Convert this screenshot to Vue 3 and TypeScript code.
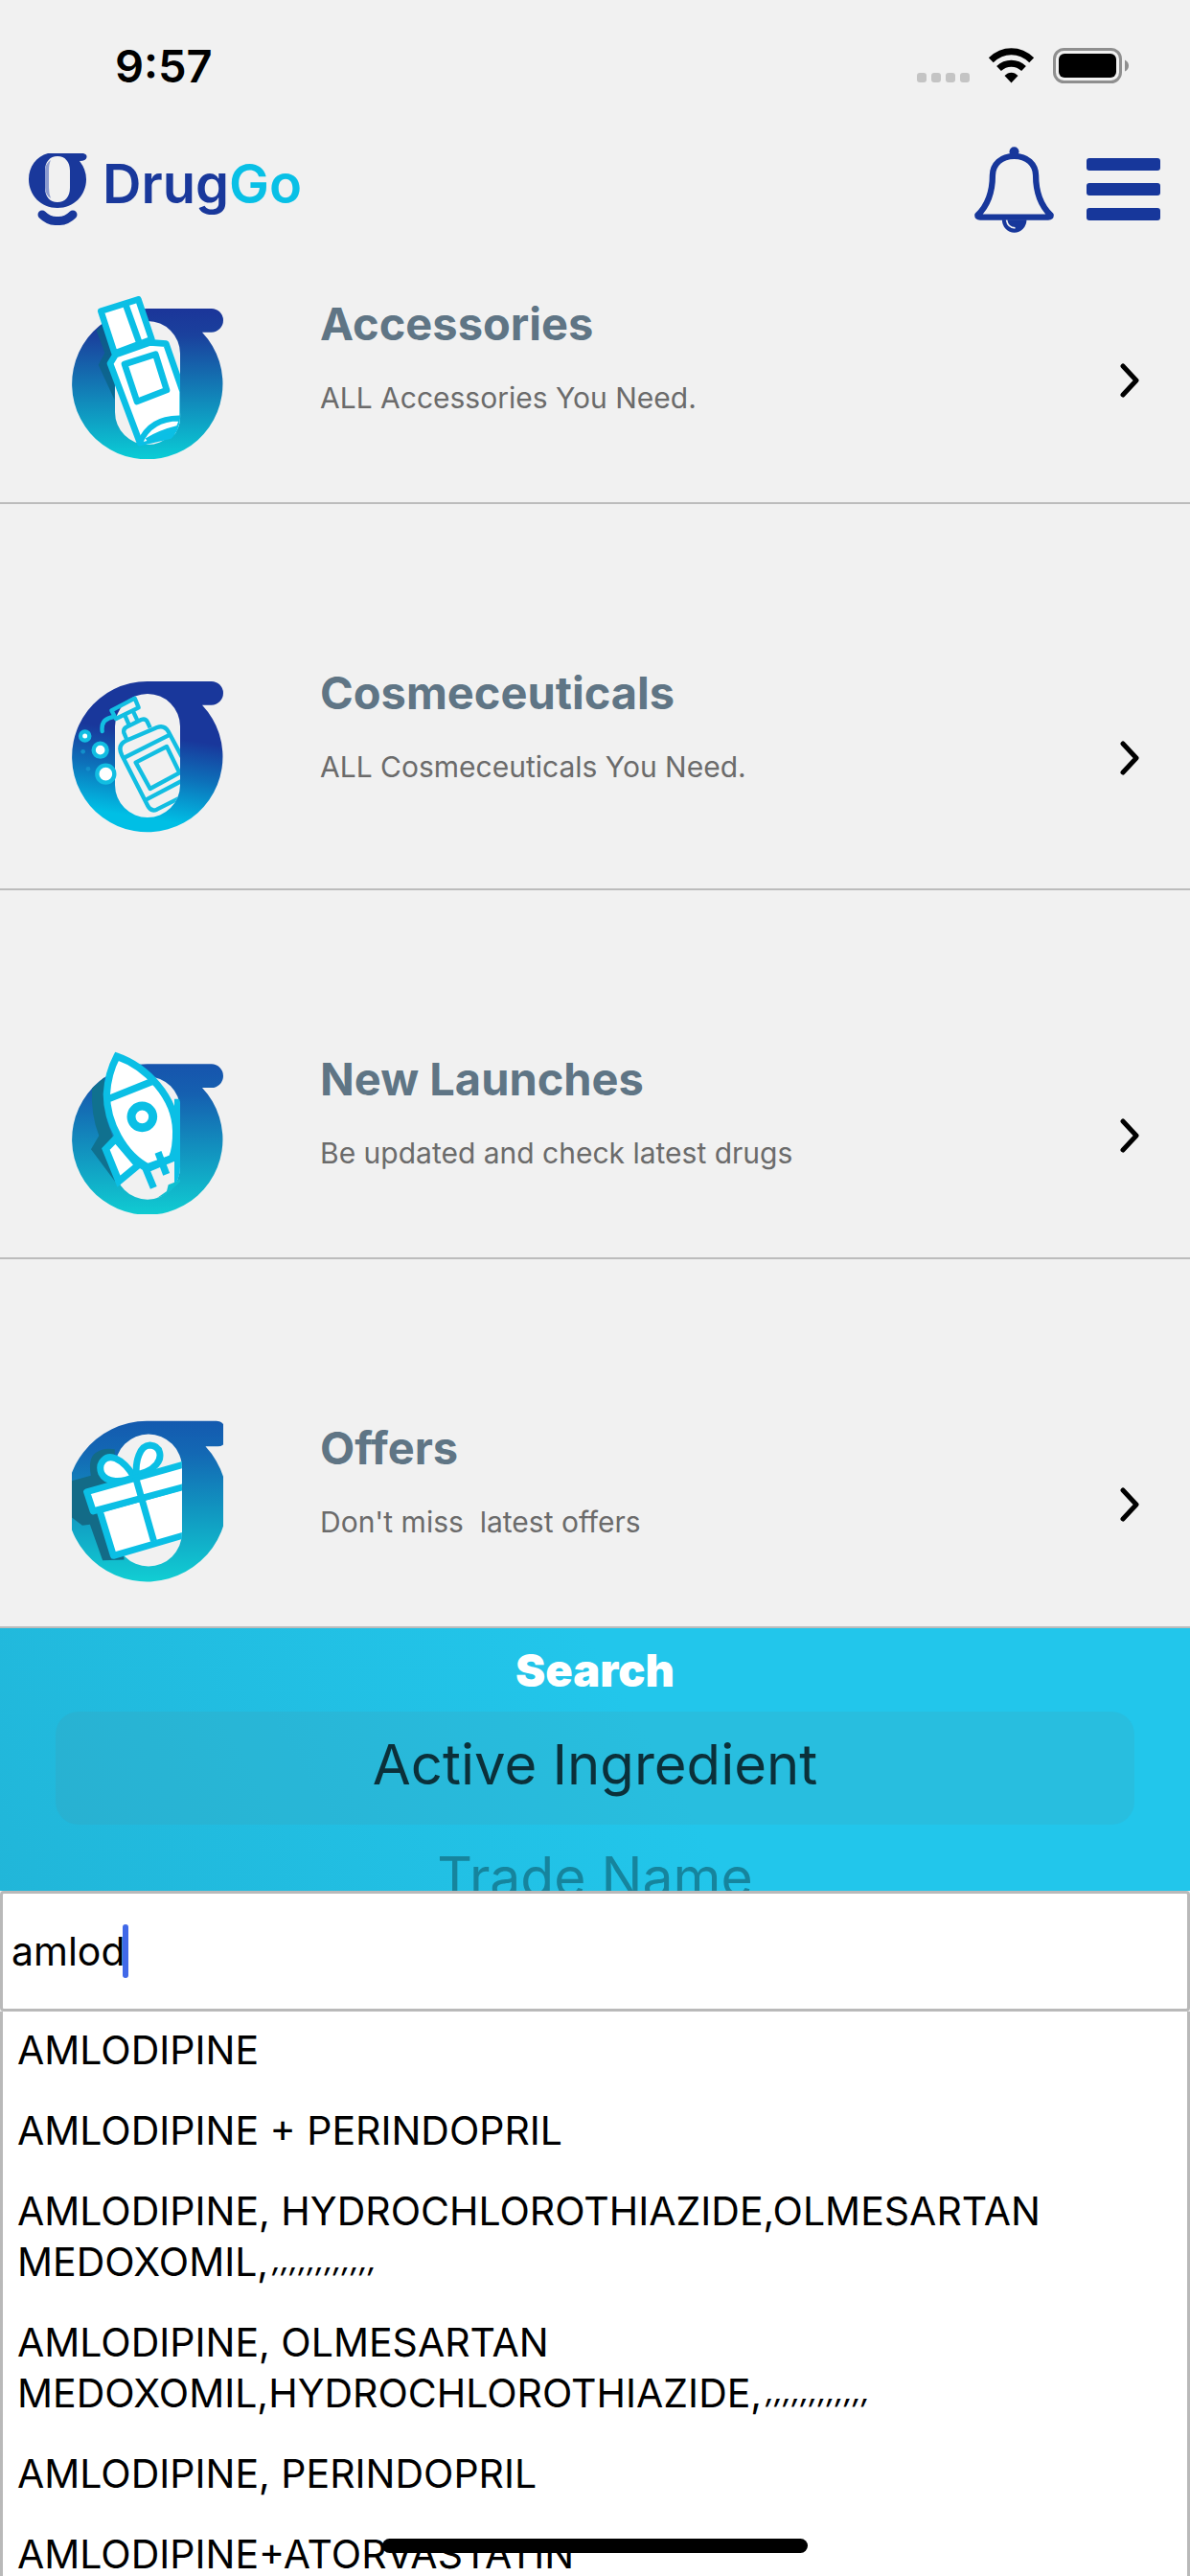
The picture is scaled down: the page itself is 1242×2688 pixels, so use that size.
<script setup lang="ts">
import { ref } from 'vue'

interface Category {
  id: 'accessories' | 'cosmeceuticals' | 'launches' | 'offers'
  title: string
  text: string
  viewBox: string
}

interface Suggestion {
  name: string
  tail?: string
}

const categories: Category[] = [
  { id: 'accessories', title: 'Accessories', text: 'ALL Accessories You Need.', viewBox: '105 87 474 510' },
  { id: 'cosmeceuticals', title: 'Cosmeceuticals', text: 'ALL Cosmeceuticals You Need.', viewBox: '105 45 474 564' },
  { id: 'launches', title: 'New Launches', text: 'Be updated and check latest drugs', viewBox: '105 81 474 510' },
  { id: 'offers', title: 'Offers', text: "Don't miss\u00a0 latest offers", viewBox: '105 68 477 508' },
]

const modes: string[] = ['Active Ingredient', 'Trade Name']
const mode = ref<string>(modes[0])
const query = ref<string>('amlod')

const suggestions: Suggestion[] = [
  { name: 'AMLODIPINE' },
  { name: 'AMLODIPINE + PERINDOPRIL' },
  { name: 'AMLODIPINE, HYDROCHLOROTHIAZIDE,OLMESARTAN MEDOXOMIL,', tail: ',,,,,,,,,,,,' },
  { name: 'AMLODIPINE, OLMESARTAN MEDOXOMIL,HYDROCHLOROTHIAZIDE,', tail: ',,,,,,,,,,,,' },
  { name: 'AMLODIPINE, PERINDOPRIL' },
  { name: 'AMLODIPINE+ATORVASTATIN' },
]
</script>

<template>
  <div class="app">
    <div class="status">
      <span class="time">9:57</span>
      <svg class="status-icons" viewBox="957 47 222 40" width="222" height="40" aria-hidden="true">
        <g fill="#c4c4c4">
          <rect x="957" y="75" width="10" height="10" rx="3" />
          <rect x="972" y="75" width="10" height="10" rx="3" />
          <rect x="987" y="75" width="10" height="10" rx="3" />
          <rect x="1002" y="75" width="10" height="10" rx="3" />
        </g>
        <path d="M1055.500 85.500l-7-7.500c4-4.500 10-4.500 14 0z" />
        <g fill="none" stroke="#000" stroke-width="7">
          <path d="M1042.500 70.500c7.500-7 18.500-7 26 0" />
          <path d="M1034.300 61.700c12.500-12 30-12 42.400 0" />
        </g>
        <rect x="1100.500" y="50.500" width="69" height="34" rx="10" fill="none" stroke="#8f8f8f" stroke-width="3" />
        <rect x="1105" y="55" width="60" height="25" rx="6" />
        <path d="M1174 61.500q4 2 4 6t-4 6z" fill="#8f8f8f" />
      </svg>
    </div>

    <header class="header">
      <a class="brand" href="#" aria-label="DrugGo">
        <svg viewBox="30 160 61 75" width="61" height="75" aria-hidden="true">
          <path fill="#19389b" fill-rule="evenodd" d="M50 160H87Q91 161 90.500 164Q90 168 83 168Q90 177 90 187C90 204 77 217 60 217S30 204 30 187C30 174 38 163 50 160ZM60 163C52 163 47 169 47 178V196C47 205 52 211 60 211S73 205 73 196V178C73 169 68 163 60 163Z" />
          <path fill="#8b9bd0" d="M53 167Q47 171 47 178V196Q47 203 53 207Q51 202 51 196V178Q51 171 53 167Z" />
          <path fill="none" stroke="#19389b" stroke-width="9" stroke-linecap="round" d="M44 224Q51 231 60 230.500Q69 231 76 224" />
        </svg>
        <span class="brand-name">Drug<span class="brand-go">Go</span></span>
      </a>
      <div class="actions">
        <button type="button" class="icon-button" aria-label="Notifications">
          <svg viewBox="352 459 250 270" width="83" height="90" aria-hidden="true">
            <circle cx="477" cy="474" r="15" fill="#17379b" />
            <path fill="none" stroke="#17379b" stroke-width="19" stroke-linejoin="round" d="M477 488C436 488 410 514 409 548C409 606 393 644 362 674Q362 680 370 680H584Q592 680 592 674C561 644 545 606 545 548C544 514 518 488 477 488Z" />
            <path fill="#17379b" d="M439 688H516A38 40 0 0 1 439 688Z" />
            <path fill="none" stroke="#f1f1f1" stroke-width="5" d="M453 689Q457 713 480 714" />
          </svg>
        </button>
        <button type="button" class="icon-button" aria-label="Menu">
          <svg viewBox="0 0 77 66" width="77" height="66" fill="#17379b" aria-hidden="true">
            <rect width="77" height="13" rx="3" />
            <rect y="26" width="77" height="13" rx="3" />
            <rect y="52" width="77" height="13" rx="3" />
          </svg>
        </button>
      </div>
    </header>

    <main class="categories">
      <a v-for="c in categories" :key="c.id" class="row" href="#">
        <svg :class="['picture', c.id]" :viewBox="c.viewBox" aria-hidden="true">
          <template v-if="c.id === 'accessories'">
            <defs>
              <linearGradient id="ga" x1="0" y1="0" x2="0" y2="1">
                <stop offset="0" stop-color="#1b3599" />
                <stop offset=".18" stop-color="#1a419d" />
                <stop offset=".5" stop-color="#1376b3" />
                <stop offset="1" stop-color="#0acdd6" />
              </linearGradient>
              <clipPath id="ca"><path d="M105 80H400L444 240V450A102 102 0 0 1 300 555L105 400Z" /></clipPath>
            </defs>
            <path fill="url(#ga)" fill-rule="evenodd" d="M341 126H542a37 37 0 0 1 0 74H513A236 236 0 1 1 341 126ZM240 267V450a102 102 0 0 0 204 0V267a102 102 0 0 0-204 0Z" />
            <path fill="#0b6384" opacity=".75" d="M200 178L182 195 208 265 188 302 238 410 240 330 225 290 235 262Z" />
            <g clip-path="url(#ca)" fill="#fff" stroke="#0bbfe5" stroke-width="20" stroke-linejoin="round">
              <path d="M196 134L313 97 355 222 239 266Z" />
              <path d="M273 112L318 238" />
              <path d="M225 298L242 270 350 232 400 236 452 385V470L430 520 318 546Z" />
              <path d="M270 300L367 269 402 381 309 417Z" />
              <path d="M318 546Q352 465 452 470L440 500Q380 515 340 540" stroke-width="18" />
            </g>
          </template>

          <template v-else-if="c.id === 'cosmeceuticals'">
            <defs>
              <linearGradient id="gc" x1=".58" y1="0" x2=".42" y2="1">
                <stop offset=".35" stop-color="#19379b" />
                <stop offset=".6" stop-color="#0d70b9" />
                <stop offset=".9" stop-color="#00bfe5" />
              </linearGradient>
              <clipPath id="cc"><path d="M105 96H444V420A102 102 0 0 1 342 522L105 460Z" /></clipPath>
            </defs>
            <path fill="url(#gc)" fill-rule="evenodd" d="M341 96H542a37 37 0 0 1 0 74H513A236 236 0 1 1 341 96ZM240 237V420a102 102 0 0 0 204 0V237a102 102 0 0 0-204 0Z" />
            <g clip-path="url(#cc)" fill="none" stroke="#12bee2" stroke-width="13" stroke-linejoin="round">
              <path d="M229 187L302 149 314 178 243 213Z" />
              <path d="M236 207Q195 213 200 252" stroke-linecap="round" />
              <path d="M271 202L284 232M297 190L310 218" />
              <path d="M276 276L268 257Q265 244 278 238L322 216Q335 211 341 222L350 241" />
              <path d="M262 328Q246 296 274 282L372 240Q395 232 407 253L472 375M262 328L343 486Q353 505 371 497L452 456" />
              <path d="M267 336L412 263M305 350L402 300 442 382 350 432ZM338 466L450 407" />
            </g>
            <g fill="#fff" stroke="#12bee2" stroke-width="13">
              <circle cx="146" cy="267" r="14" />
              <circle cx="194" cy="311" r="21" />
              <circle cx="211" cy="386" r="27" />
            </g>
            <g fill="#128fca"><circle cx="140" cy="316" r="7" /><circle cx="156" cy="370" r="7" /></g>
          </template>

          <template v-else-if="c.id === 'launches'">
            <defs>
              <linearGradient id="gl" x1="0" y1="0" x2="0" y2="1">
                <stop offset="0" stop-color="#1654ad" />
                <stop offset=".2" stop-color="#1560b0" />
                <stop offset=".55" stop-color="#128fbe" />
                <stop offset="1" stop-color="#10ccd2" />
              </linearGradient>
              <clipPath id="cl"><path d="M105 80H400L444 240V443A102 102 0 0 1 300 537L105 480Z" /></clipPath>
            </defs>
            <path fill="url(#gl)" fill-rule="evenodd" d="M341 121H542a37 37 0 0 1 0 74H513A236 236 0 1 1 341 121ZM240 262V443a102 102 0 0 0 204 0V262a102 102 0 0 0-204 0Z" />
            <path fill="#10718f" d="M206 163L168 197Q164 280 190 345L165 388 240 488 245 380 215 300Z" />
            <g clip-path="url(#cl)" fill="#fff" stroke="#0bbfe5" stroke-width="22">
              <path d="M242 355L211 387 252 488 312 438Z" />
              <path d="M246 97C340 130 429 225 431 330Q432 385 418 417L348 446C265 405 214 300 214 215Q218 150 246 97Z" />
              <path d="M222 229L360 174" />
              <circle cx="325" cy="286" r="34" stroke-width="27" />
              <path fill="none" d="M318 434L335 445 361 508M335 446L428 412M375 397L401 466M437 230V500" />
            </g>
            <path fill="#10bfd0" d="M444 481L432 489 407 499 402 519 372 540 400 530 444 490Z" />
          </template>

          <template v-else>
            <defs>
              <linearGradient id="go" x1="0" y1="0" x2="0" y2="1">
                <stop offset="0" stop-color="#145aaf" />
                <stop offset=".2" stop-color="#1368b4" />
                <stop offset=".55" stop-color="#1195c0" />
                <stop offset="1" stop-color="#11ced3" />
              </linearGradient>
              <clipPath id="co"><path d="M105 68H452V440L420 510H105Z" /></clipPath>
            </defs>
            <path fill="url(#go)" fill-rule="evenodd" d="M341 68H560Q582 68 592 95V130Q582 148 565 148H526A253 253 0 1 1 341 68ZM241 215V420a105 105 0 0 0 211 0V215a105 105 0 0 0-211 0Z" />
            <path fill="#136b87" d="M240 157Q205 150 180 168 155 185 165 240L105 256V372L138 397 162 394 202 507 270 505 240 300Z" />
            <g clip-path="url(#co)" fill="#fff" stroke="#0bbfe5" stroke-width="21" stroke-linejoin="round">
              <path d="M192 348L236 492 470 424V270Z" />
              <path d="M300 244C265 262 213 264 198 232C186 200 212 172 243 186C274 200 290 226 300 244Z" />
              <path d="M308 238C305 195 318 145 351 144C387 146 390 184 371 205C353 226 330 232 308 238Z" />
              <path d="M152 291L470 201V272L172 352Z" />
              <path fill="none" d="M306 246L363 446" />
            </g>
          </template>
        </svg>
        <div class="copy">
          <h2>{{ c.title }}</h2>
          <p>{{ c.text }}</p>
        </div>
        <svg class="chevron" viewBox="0 0 22 36" width="22" height="36" aria-hidden="true">
          <path d="M4 3L18 18 4 33" fill="none" stroke="#000" stroke-width="5" stroke-linecap="round" stroke-linejoin="round" />
        </svg>
      </a>
    </main>

    <section class="search">
      <h1>Search</h1>
      <div class="wheel" role="listbox" aria-label="Search by">
        <button
          v-for="m in modes"
          :key="m"
          type="button"
          role="option"
          :aria-selected="m === mode"
          :class="['option', { selected: m === mode }]"
          @click="mode = m"
        >{{ m }}</button>
      </div>
    </section>

    <div class="field">
      <input v-model="query" type="text" aria-label="Search for a drug" />
      <span class="caret"></span>
    </div>

    <ul class="results">
      <li v-for="s in suggestions" :key="s.name">{{ s.name }}<span v-if="s.tail" class="tail">{{ s.tail }}</span></li>
    </ul>

    <div class="home"></div>
  </div>
</template>

<style>
body {
  margin: 0;
  background: #f1f1f1;
}
</style>

<style scoped>
.app {
  position: relative;
  display: flex;
  flex-direction: column;
  height: 100vh;
  overflow: hidden;
  background: #f1f1f1;
  color: #000;
  font-family: Inter, "Liberation Sans", sans-serif;
}
.app > * {
  flex-shrink: 0;
}
.status {
  display: flex;
  align-items: center;
  justify-content: space-between;
  height: 136px;
  padding: 0 63px 0 120px;
}
.time {
  font-size: 47px;
  font-weight: 600;
}
.header {
  display: flex;
  align-items: center;
  justify-content: space-between;
  height: 123px;
  padding: 0 31px 0 30px;
}
.brand {
  display: flex;
  align-items: center;
  gap: 16px;
  text-decoration: none;
}
.brand-name {
  margin-bottom: 12px;
  color: #19389b;
  font-size: 56px;
  font-weight: 600;
  line-height: 60px;
}
.brand-go {
  color: #08c0e6;
}
.actions {
  display: flex;
  align-items: center;
  gap: 34px;
}
.icon-button {
  display: flex;
  padding: 0;
  border: 0;
  background: none;
}
.row {
  display: flex;
  align-items: center;
  padding: 168px 52px 45px 75px;
  border-bottom: 2px solid #bcbcbc;
  color: inherit;
  text-decoration: none;
}
.row:first-child {
  padding-top: 50px;
}
.picture {
  width: 158px;
  height: 170px;
}
.picture.cosmeceuticals {
  height: 188px;
}
.copy {
  flex: 1;
  align-self: flex-start;
  margin-left: 101px;
}
.copy h2 {
  margin: 0 0 30px;
  color: #5f7585;
  font-size: 47px;
  font-weight: 700;
  line-height: 58px;
}
.copy p {
  margin: 0;
  color: #6b6b6b;
  font-size: 30px;
  line-height: 36px;
}
.chevron {
  margin-top: 6px;
}
.search {
  height: 274px;
  overflow: hidden;
  background: linear-gradient(60deg, #21b6d9 0%, #22c6eb 55%);
  text-align: center;
}
.search h1 {
  margin: 15px 0 14px;
  color: #fff;
  font-size: 47px;
  font-weight: 900;
  line-height: 58px;
}
.wheel {
  display: flex;
  flex-direction: column;
  padding: 0 58px;
}
.option {
  height: 118px;
  padding: 0 0 8px;
  border: 0;
  border-radius: 24px;
  background: none;
  color: #16849d;
  font-family: inherit;
  font-size: 57px;
  line-height: 100px;
}
.option.selected {
  background: rgba(90, 130, 140, 0.12);
  color: #0b303a;
  font-size: 58px;
}
.field {
  position: relative;
  border: 3px solid #b9b9b9;
  border-radius: 4px;
  background: #fff;
}
.field input {
  display: block;
  box-sizing: border-box;
  width: 100%;
  height: 120px;
  padding: 0 9px;
  border: 0;
  outline: 0;
  background: none;
  color: #000;
  font-family: inherit;
  font-size: 41px;
}
.caret {
  position: absolute;
  top: 32px;
  left: 125px;
  width: 6px;
  height: 56px;
  border-radius: 3px;
  background: #4169e8;
}
.results {
  flex: 1 1 0;
  min-height: 0;
  margin: 0;
  padding: 0 15px;
  overflow: hidden;
  border: solid #b9b9b9;
  border-width: 0 3px;
  background: #fff;
  list-style: none;
}
.results li {
  padding: 14px 0 17px;
  font-size: 41px;
  line-height: 53px;
}
.tail {
  margin-left: 4px;
  font-size: 30px;
  font-style: italic;
  font-weight: 500;
  line-height: 30px;
  vertical-align: 6px;
}
.home {
  position: absolute;
  bottom: 24px;
  left: 50%;
  width: 444px;
  height: 15px;
  margin-left: -222px;
  border-radius: 8px;
  background: #000;
}
</style>
